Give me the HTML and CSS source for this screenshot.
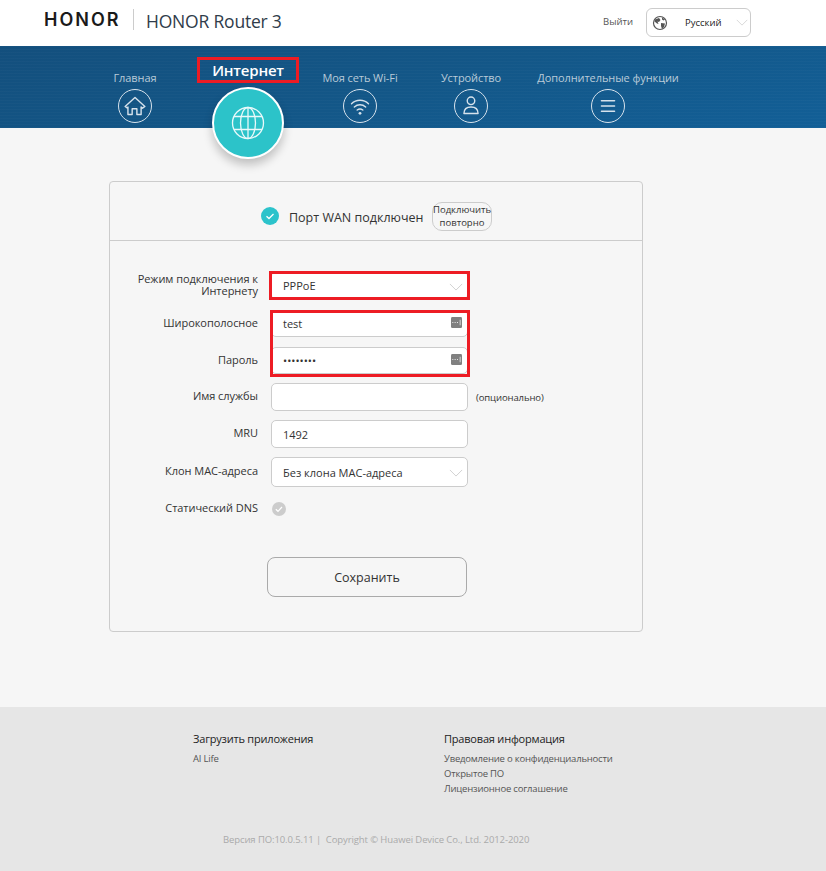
FILE: index.html
```html
<!DOCTYPE html>
<html lang="ru">
<head>
<meta charset="utf-8">
<title>HONOR Router 3</title>
<link rel="stylesheet" href="styles.css">
</head>
<body>
<header class="topbar">
  <div class="logo">HONOR</div>
  <div class="product">HONOR Router 3</div>
  <div class="logout">Выйти</div>
  <div class="lang">
    <svg class="lang-globe" viewBox="0 0 16 16"><circle cx="8" cy="8" r="6.5" fill="#fff" stroke="#555" stroke-width="1.2"/><path d="M3 4.500 7 3l1.500 2L7 7 5.500 6.500 6.500 9 5 8.500 2.500 6.500zM9 8l4 .5-1 3.500-2 2-1-3zM10 2.500l3 2-1.500 1L10 4.500z" fill="#555"/></svg>
    <span class="lang-name">Русский</span>
    <svg class="lang-chev" viewBox="0 0 16 9"><path d="M1 1l7 7 7-7" fill="none" stroke="#ccc"/></svg>
  </div>
</header>

<nav class="nav">
  <a class="nav-item w1"><span class="nav-label">Главная</span>
    <span class="nav-ring"><svg viewBox="0 0 34 34"><path d="M6.500 17.500 17 8l10.500 9.500-2.500 1.800-1.500-1.200V26h-4.500v-6h-5v6h-4.500v-7.900L9 19.300z" fill="none" stroke="#d6e2ec" stroke-width="1.500" stroke-linejoin="round"/></svg></span></a>
  <a class="nav-item nav-active w1b"><span class="nav-label-active">Интернет</span>
    <span class="nav-disc"><svg viewBox="0 0 34 34"><circle cx="17" cy="17" r="15.500" fill="none" stroke="#e9f9fa" stroke-width="1.300"/><ellipse cx="17" cy="17" rx="7.500" ry="15.500" fill="none" stroke="#e9f9fa" stroke-width="1.300"/><path d="M17 1.500v31M3 10.500h28M3 23.500h28" stroke="#e9f9fa" stroke-width="1.300"/></svg></span></a>
  <a class="nav-item w1b"><span class="nav-label">Моя сеть Wi-Fi</span>
    <span class="nav-ring"><svg viewBox="0 0 34 34"><path d="M8 14.500c5-4.700 13-4.700 18 0M11 18c3.400-3 8.600-3 12 0M14 21.300c1.800-1.400 4.200-1.400 6 0" fill="none" stroke="#d6e2ec" stroke-width="1.500" stroke-linecap="round"/><circle cx="17" cy="24.800" r="1.500" fill="#d6e2ec"/></svg></span></a>
  <a class="nav-item w2"><span class="nav-label">Устройство</span>
    <span class="nav-ring"><svg viewBox="0 0 34 34"><circle cx="17" cy="11.500" r="4" fill="none" stroke="#d6e2ec" stroke-width="1.500"/><path d="M9.500 25c0-4.500 3-7 7.500-7s7.500 2.500 7.500 7z" fill="none" stroke="#d6e2ec" stroke-width="1.500" stroke-linejoin="round"/></svg></span></a>
  <a class="nav-item w3"><span class="nav-label">Дополнительные функции</span>
    <span class="nav-ring"><svg viewBox="0 0 34 34"><path d="M10 11.500h14M10 17h14M10 22.500h14" stroke="#d6e2ec" stroke-width="1.500" stroke-linecap="round"/></svg></span></a>
</nav>

<main class="main">
  <section class="card">
    <div class="status">
      <svg class="status-icon" viewBox="0 0 18 18"><circle cx="9" cy="9" r="9" fill="#2cc3cb"/><path d="M5.500 9.200 8 11.500l4.500-4.500" fill="none" stroke="#fff" stroke-width="1.300"/></svg>
      <span class="status-text">Порт WAN подключен</span>
      <button class="reconnect">Подключить повторно</button>
    </div>
    <form class="form">
      <div class="row row-mode">
        <label class="label">Режим подключения к Интернету</label>
        <div class="field select marked-select">PPPoE<svg class="chev" viewBox="0 0 16 9"><path d="M1 1l7 7 7-7" fill="none" stroke="#ccc"/></svg></div>
      </div>
      <div class="credentials">
        <div class="row row-cred">
          <label class="label">Широкополосное</label>
          <div class="field input">test<svg class="reveal" viewBox="0 0 12 12"><rect width="12" height="12" rx="1.500" fill="#808080"/><path d="M1.500 6h1M4 6h1M6.500 6h1" stroke="#fff"/><path d="M10 3v6" stroke="#ddd"/></svg></div>
        </div>
        <div class="row row-cred">
          <label class="label">Пароль</label>
          <div class="field input">••••••••<svg class="reveal" viewBox="0 0 12 12"><rect width="12" height="12" rx="1.500" fill="#808080"/><path d="M1.500 6h1M4 6h1M6.500 6h1" stroke="#fff"/><path d="M10 3v6" stroke="#ddd"/></svg></div>
        </div>
      </div>
      <div class="row">
        <label class="label">Имя службы</label>
        <div class="field input"></div>
        <span class="hint">(опционально)</span>
      </div>
      <div class="row">
        <label class="label">MRU</label>
        <div class="field input">1492</div>
      </div>
      <div class="row row-clone">
        <label class="label">Клон МАС-адреса</label>
        <div class="field select">Без клона МАС-адреса<svg class="chev" viewBox="0 0 16 9"><path d="M1 1l7 7 7-7" fill="none" stroke="#ccc"/></svg></div>
      </div>
      <div class="row row-dns">
        <label class="label">Статический DNS</label>
        <svg class="dns-check" viewBox="0 0 14 14"><circle cx="7" cy="7" r="7" fill="#ccc"/><path d="M3.800 7.200 6 9.300l4-4.300" fill="none" stroke="#fff" stroke-width="1.200"/></svg>
      </div>
      <button class="save" type="button">Сохранить</button>
    </form>
  </section>
</main>

<footer class="footer">
  <div class="footer-cols">
    <div class="footer-col col-apps">
      <h2 class="footer-title">Загрузить приложения</h2>
      <a class="footer-link">AI Life</a>
    </div>
    <div class="footer-col">
      <h2 class="footer-title">Правовая информация</h2>
      <a class="footer-link">Уведомление о конфиденциальности</a>
      <a class="footer-link">Открытое ПО</a>
      <a class="footer-link">Лицензионное соглашение</a>
    </div>
  </div>
  <div class="version">Версия ПО:10.0.5.11 |&nbsp; Copyright © Huawei Device Co., Ltd. 2012-2020</div>
</footer>
</body>
</html>
```
FILE: styles.css
```css
*, *::after { box-sizing: border-box; }
html, body { margin: 0; padding: 0; }
body {
  width: 826px;
  height: 871px;
  overflow: hidden;
  font-family: "Open Sans", "Noto Sans", sans-serif;
  font-size: 11px;
  color: #333;
  background: #f6f6f6;
  display: flex;
  flex-direction: column;
}

/* top bar */
.topbar {
  height: 46px;
  background: #fff;
  display: flex;
  align-items: center;
  padding-left: 44px;
  flex: none;
}
.logo {
  font-family: Inter, sans-serif;
  font-weight: 600;
  font-size: 18px;
  letter-spacing: 2px;
  color: #1a1a1a;
  width: 90px;
  line-height: 21px;
  height: 21px;
  border-right: 1px solid #ccc;
  margin-top: -7px;
}
.product {
  font-size: 17.500px;
  letter-spacing: -.2px;
  color: #303c4a;
  margin-left: 12px;
  margin-top: -4px;
  width: 457px;
  white-space: nowrap;
}
.logout { font-size: 9.500px; color: #555; width: 43px; margin-top: -3px; }
.lang {
  width: 105px;
  height: 29px;
  border: 1px solid #ccc;
  border-radius: 6px;
  display: flex;
  align-items: center;
  padding-left: 5px;
  margin-top: -1px;
  background: #fff;
}
.lang-globe { width: 16px; height: 16px; }
.lang-name { font-size: 9.500px; color: #222; margin-left: 17px; width: 51px; }
.lang-chev { width: 12px; height: 7px; }

/* nav */
.nav {
  height: 82px;
  flex: none;
  display: flex;
  padding-left: 78px;
  background:
    repeating-linear-gradient(0deg, rgba(255,255,255,.018) 0 1px, transparent 1px 3px),
    linear-gradient(165deg, #134f7d 0%, #135788 50%, #125f97 100%);
}
.nav-item {
  display: flex;
  flex-direction: column;
  align-items: center;
  width: 114px;
  padding-top: 24px;
}
.w1b { width: 112px; }
.w2 { width: 110px; }
.w3 { width: 164px; }
.nav-label {
  font-size: 11px;
  letter-spacing: -.08px;
  line-height: 16px;
  color: #b9cbd9;
  white-space: nowrap;
}
.nav-ring {
  width: 34px;
  height: 34px;
  margin-top: 3px;
  border: 1px solid #d6e2ec;
  border-radius: 50%;
  display: block;
  flex: none;
}
.nav-ring svg { display: block; width: 32px; height: 32px; }
.nav-active { padding-top: 11px; }
.nav-label-active {
  width: 102px;
  height: 26px;
  flex: none;
  border: 3px solid #ed1c24;
  color: #fff;
  font-size: 15px;
  letter-spacing: -.2px;
  font-weight: 600;
  line-height: 20px;
  text-align: center;
}
.nav-disc {
  width: 72px;
  height: 72px;
  flex: none;
  margin-top: 4px;
  border: 2px solid #fff;
  border-radius: 50%;
  background: #2cc3c9;
  box-shadow: 0 6px 10px rgba(0,0,0,.22);
  display: flex;
  align-items: center;
  justify-content: center;
  position: relative;
}
.nav-disc svg { width: 34px; height: 34px; }

/* card */
.main { flex: 1; padding: 53px 0 0 109px; }
.card {
  width: 534px;
  height: 451px;
  border: 1px solid #ccc;
  border-radius: 4px;
}
.status {
  height: 59px;
  border-bottom: 1px solid #ccc;
  display: flex;
  align-items: center;
  padding: 10px 0 0 151px;
}
.status-icon { width: 18px; height: 18px; }
.status-text { font-size: 12.500px; margin-left: 10px; padding-top: 3px; color: #333; width: 143px; white-space: nowrap; }
.reconnect {
  width: 60px;
  height: 29px;
  padding: 0;
  border: 1px solid #ccc;
  border-radius: 10px;
  background: #f6f6f6;
  font: 9.500px/13px "Open Sans", sans-serif;
  color: #333;
}

/* form */
.form { padding: 30px 0 0 0; position: relative; }
.row {
  display: flex;
  align-items: center;
  height: 28px;
  margin-bottom: 9px;
}
.row-mode { height: 29px; margin-bottom: 10px; }
.row-cred { height: 27px; margin-bottom: 10px; }
.credentials { position: relative; margin-bottom: -1px; }
.row-clone { height: 30px; margin-bottom: 15px; }
.label {
  width: 148px;
  text-align: right;
  padding-left: 18px;
  padding-bottom: 2px;
  line-height: 12px;
  flex: none;
  font-size: 11px;
  letter-spacing: -.04px;
  color: #333;
}
.field {
  width: 197px;
  margin-left: 13px;
  height: 100%;
  flex: none;
  background: #fff;
  border: 1px solid #ccc;
  border-radius: 5px;
  padding-left: 11px;
  display: flex;
  align-items: center;
  font-size: 11px;
  color: #333;
  position: relative;
}
.chev {
  position: absolute;
  right: 4px;
  top: 11px;
  width: 14px;
  height: 8px;
}
.reveal {
  position: absolute;
  right: 5px;
  top: 6px;
  width: 11px;
  height: 11px;
}
.marked-select::after {
  content: "";
  position: absolute;
  inset: -1px -3px;
  border: 3px solid #ed1c24;
  pointer-events: none;
}
.credentials::after {
  content: "";
  position: absolute;
  left: 160px;
  top: 0;
  width: 200px;
  height: 67px;
  border: 3px solid #ed1c24;
  pointer-events: none;
}
.hint { font-size: 9.500px; letter-spacing: -.1px; margin-left: 8px; color: #333; }
.row-dns { height: 14px; margin-bottom: 0; }
.dns-check { width: 14px; height: 14px; margin-left: 14px; }
.save {
  display: block;
  width: 200px;
  height: 40px;
  margin: 41px 0 0 157px;
  background: #f6f6f6;
  border: 1px solid #aaa;
  border-radius: 8px;
  font: 12.500px "Open Sans", sans-serif;
  color: #333;
}

/* footer */
.footer {
  height: 164px;
  flex: none;
  background: #e6e6e6;
  padding: 24px 0 0 193px;
}
.footer-cols { display: flex; }
.col-apps { width: 251px; }
.footer-col { display: flex; flex-direction: column; }
.footer-title {
  margin: 0 0 5px;
  font-size: 11px;
  letter-spacing: -.2px;
  line-height: 15px;
  font-weight: 400;
  color: #222;
}
.footer-link { font-size: 9.500px; letter-spacing: -.2px; line-height: 15px; color: #555; }
.version {
  margin: 36px 0 0 30px;
  font-size: 9.500px;
  letter-spacing: -.1px;
  line-height: 15px;
  color: #aaa;
  white-space: nowrap;
}
```
